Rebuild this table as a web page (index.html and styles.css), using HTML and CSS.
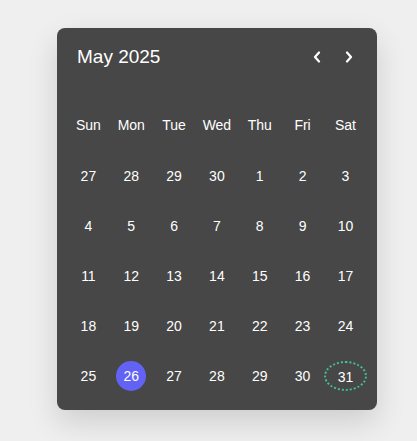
FILE: index.html
```html
<!DOCTYPE html>
<html>
<head>
<meta charset="utf-8">
<link rel="stylesheet" href="styles.css">
</head>
<body>
<div class="card">
  <div class="header">
    <span class="title">May 2025</span>
    <div class="nav">
      <button class="navbtn" aria-label="Previous month"><svg width="8" height="12" viewBox="0 0 8 12"><path d="M6 1.5 L2 6 L6 10.5" fill="none" stroke="#fff" stroke-width="2.2" stroke-linecap="round" stroke-linejoin="round"/></svg></button>
      <button class="navbtn" aria-label="Next month"><svg width="8" height="12" viewBox="0 0 8 12"><path d="M2 1.5 L6 6 L2 10.5" fill="none" stroke="#fff" stroke-width="2.2" stroke-linecap="round" stroke-linejoin="round"/></svg></button>
    </div>
  </div>
  <div class="grid">
    <div class="cell wd">Sun</div><div class="cell wd">Mon</div><div class="cell wd">Tue</div><div class="cell wd">Wed</div><div class="cell wd">Thu</div><div class="cell wd">Fri</div><div class="cell wd">Sat</div>
    <div class="cell"><span class="d">27</span></div><div class="cell"><span class="d">28</span></div><div class="cell"><span class="d">29</span></div><div class="cell"><span class="d">30</span></div><div class="cell"><span class="d">1</span></div><div class="cell"><span class="d">2</span></div><div class="cell"><span class="d">3</span></div>
    <div class="cell"><span class="d">4</span></div><div class="cell"><span class="d">5</span></div><div class="cell"><span class="d">6</span></div><div class="cell"><span class="d">7</span></div><div class="cell"><span class="d">8</span></div><div class="cell"><span class="d">9</span></div><div class="cell"><span class="d">10</span></div>
    <div class="cell"><span class="d">11</span></div><div class="cell"><span class="d">12</span></div><div class="cell"><span class="d">13</span></div><div class="cell"><span class="d">14</span></div><div class="cell"><span class="d">15</span></div><div class="cell"><span class="d">16</span></div><div class="cell"><span class="d">17</span></div>
    <div class="cell"><span class="d">18</span></div><div class="cell"><span class="d">19</span></div><div class="cell"><span class="d">20</span></div><div class="cell"><span class="d">21</span></div><div class="cell"><span class="d">22</span></div><div class="cell"><span class="d">23</span></div><div class="cell"><span class="d">24</span></div>
    <div class="cell"><span class="d">25</span></div><div class="cell"><span class="d today">26</span></div><div class="cell"><span class="d">27</span></div><div class="cell"><span class="d">28</span></div><div class="cell"><span class="d">29</span></div><div class="cell"><span class="d">30</span></div><div class="cell"><span class="d focus">31</span></div>
  </div>
</div>
</body>
</html>
```
FILE: styles.css
```css
html, body {
  margin: 0;
  padding: 0;
}
body {
  background: #efefef;
  font-family: "Liberation Sans", Arial, sans-serif;
  width: 417px;
  height: 441px;
  overflow: hidden;
}
.card {
  margin: 28px 0 0 57px;
  width: 320px;
  box-sizing: border-box;
  padding: 19px 10px 10px;
  background: #474747;
  border-radius: 8px;
  box-shadow: 0 12px 30px rgba(0, 0, 0, 0.14);
  color: #fff;
}
.header {
  display: flex;
  align-items: center;
  justify-content: space-between;
  padding: 0 10px;
  height: 20px;
  margin-bottom: 33px;
}
.title {
  font-size: 19px;
  line-height: 20px;
  color: #fff;
}
.nav {
  display: flex;
  gap: 24px;
  margin-right: 4px;
}
.navbtn {
  background: none;
  border: 0;
  padding: 0;
  width: 8px;
  height: 12px;
  display: flex;
  cursor: pointer;
}
.grid {
  display: grid;
  grid-template-columns: repeat(7, 1fr);
  grid-auto-rows: 50px;
}
.cell {
  display: flex;
  align-items: center;
  justify-content: center;
  font-size: 14px;
  color: #fff;
}
.grid .cell:nth-child(n+8) {
  padding-top: 1px;
}
.d {
  display: flex;
  align-items: center;
  justify-content: center;
  width: 30px;
  height: 30px;
  border-radius: 50%;
  box-sizing: border-box;
}
.today {
  background: #6262f4;
}
.focus {
  width: 43px;
  border: 2px dotted #42c096;
  padding-top: 2px;
}
```
